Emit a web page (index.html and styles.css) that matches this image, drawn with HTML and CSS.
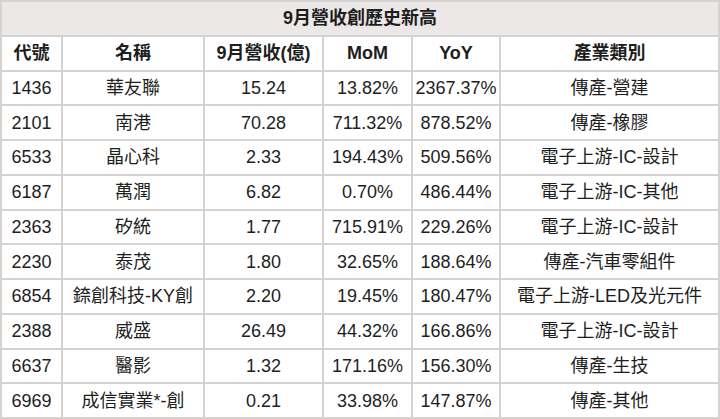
FILE: index.html
```html
<!DOCTYPE html>
<html lang="zh-Hant">
<head>
<meta charset="utf-8">
<link rel="stylesheet" href="styles.css">
</head>
<body>
<table class="rev">
  <colgroup>
    <col class="c1"><col class="c2"><col class="c3"><col class="c4"><col class="c5"><col class="c6">
  </colgroup>
  <thead>
    <tr class="title"><th colspan="6">9月營收創歷史新高</th></tr>
    <tr class="head"><th>代號</th><th>名稱</th><th>9月營收(億)</th><th>MoM</th><th>YoY</th><th>產業類別</th></tr>
  </thead>
  <tbody>
    <tr><td>1436</td><td>華友聯</td><td>15.24</td><td>13.82%</td><td>2367.37%</td><td>傳產-營建</td></tr>
    <tr><td>2101</td><td>南港</td><td>70.28</td><td>711.32%</td><td>878.52%</td><td>傳產-橡膠</td></tr>
    <tr><td>6533</td><td>晶心科</td><td>2.33</td><td>194.43%</td><td>509.56%</td><td>電子上游-IC-設計</td></tr>
    <tr><td>6187</td><td>萬潤</td><td>6.82</td><td>0.70%</td><td>486.44%</td><td>電子上游-IC-其他</td></tr>
    <tr><td>2363</td><td>矽統</td><td>1.77</td><td>715.91%</td><td>229.26%</td><td>電子上游-IC-設計</td></tr>
    <tr><td>2230</td><td>泰茂</td><td>1.80</td><td>32.65%</td><td>188.64%</td><td>傳產-汽車零組件</td></tr>
    <tr><td>6854</td><td>錼創科技-KY創</td><td>2.20</td><td>19.45%</td><td>180.47%</td><td>電子上游-LED及光元件</td></tr>
    <tr><td>2388</td><td>威盛</td><td>26.49</td><td>44.32%</td><td>166.86%</td><td>電子上游-IC-設計</td></tr>
    <tr><td>6637</td><td>醫影</td><td>1.32</td><td>171.16%</td><td>156.30%</td><td>傳產-生技</td></tr>
    <tr><td>6969</td><td>成信實業*-創</td><td>0.21</td><td>33.98%</td><td>147.87%</td><td>傳產-其他</td></tr>
  </tbody>
</table>
</body>
</html>
```

FILE: styles.css
```css
html, body {
  margin: 0;
  padding: 0;
  background: #ffffff;
}

.rev {
  width: 720px;
  table-layout: fixed;
  border-collapse: separate;
  border-spacing: 0;
  border-top: 2px solid #d6d2d2;
  border-left: 2px solid #d6d2d2;
  font-family: "Liberation Sans", "Noto Sans CJK TC", sans-serif;
  font-size: 18px;
  color: #1e1e1e;
}

.c1 { width: 61px; }
.c2 { width: 142px; }
.c3 { width: 119px; }
.c4 { width: 89px; }
.c5 { width: 88px; }
.c6 { width: 219px; }

.rev th,
.rev td {
  height: 32.75px;
  padding: 0;
  text-align: center;
  vertical-align: middle;
  white-space: nowrap;
  border-right: 2px solid #d6d2d2;
  border-bottom: 2px solid #d6d2d2;
  line-height: 20px;
}

.rev th {
  font-weight: bold;
}

.title th {
  background: #ebe8e7;
}
```
